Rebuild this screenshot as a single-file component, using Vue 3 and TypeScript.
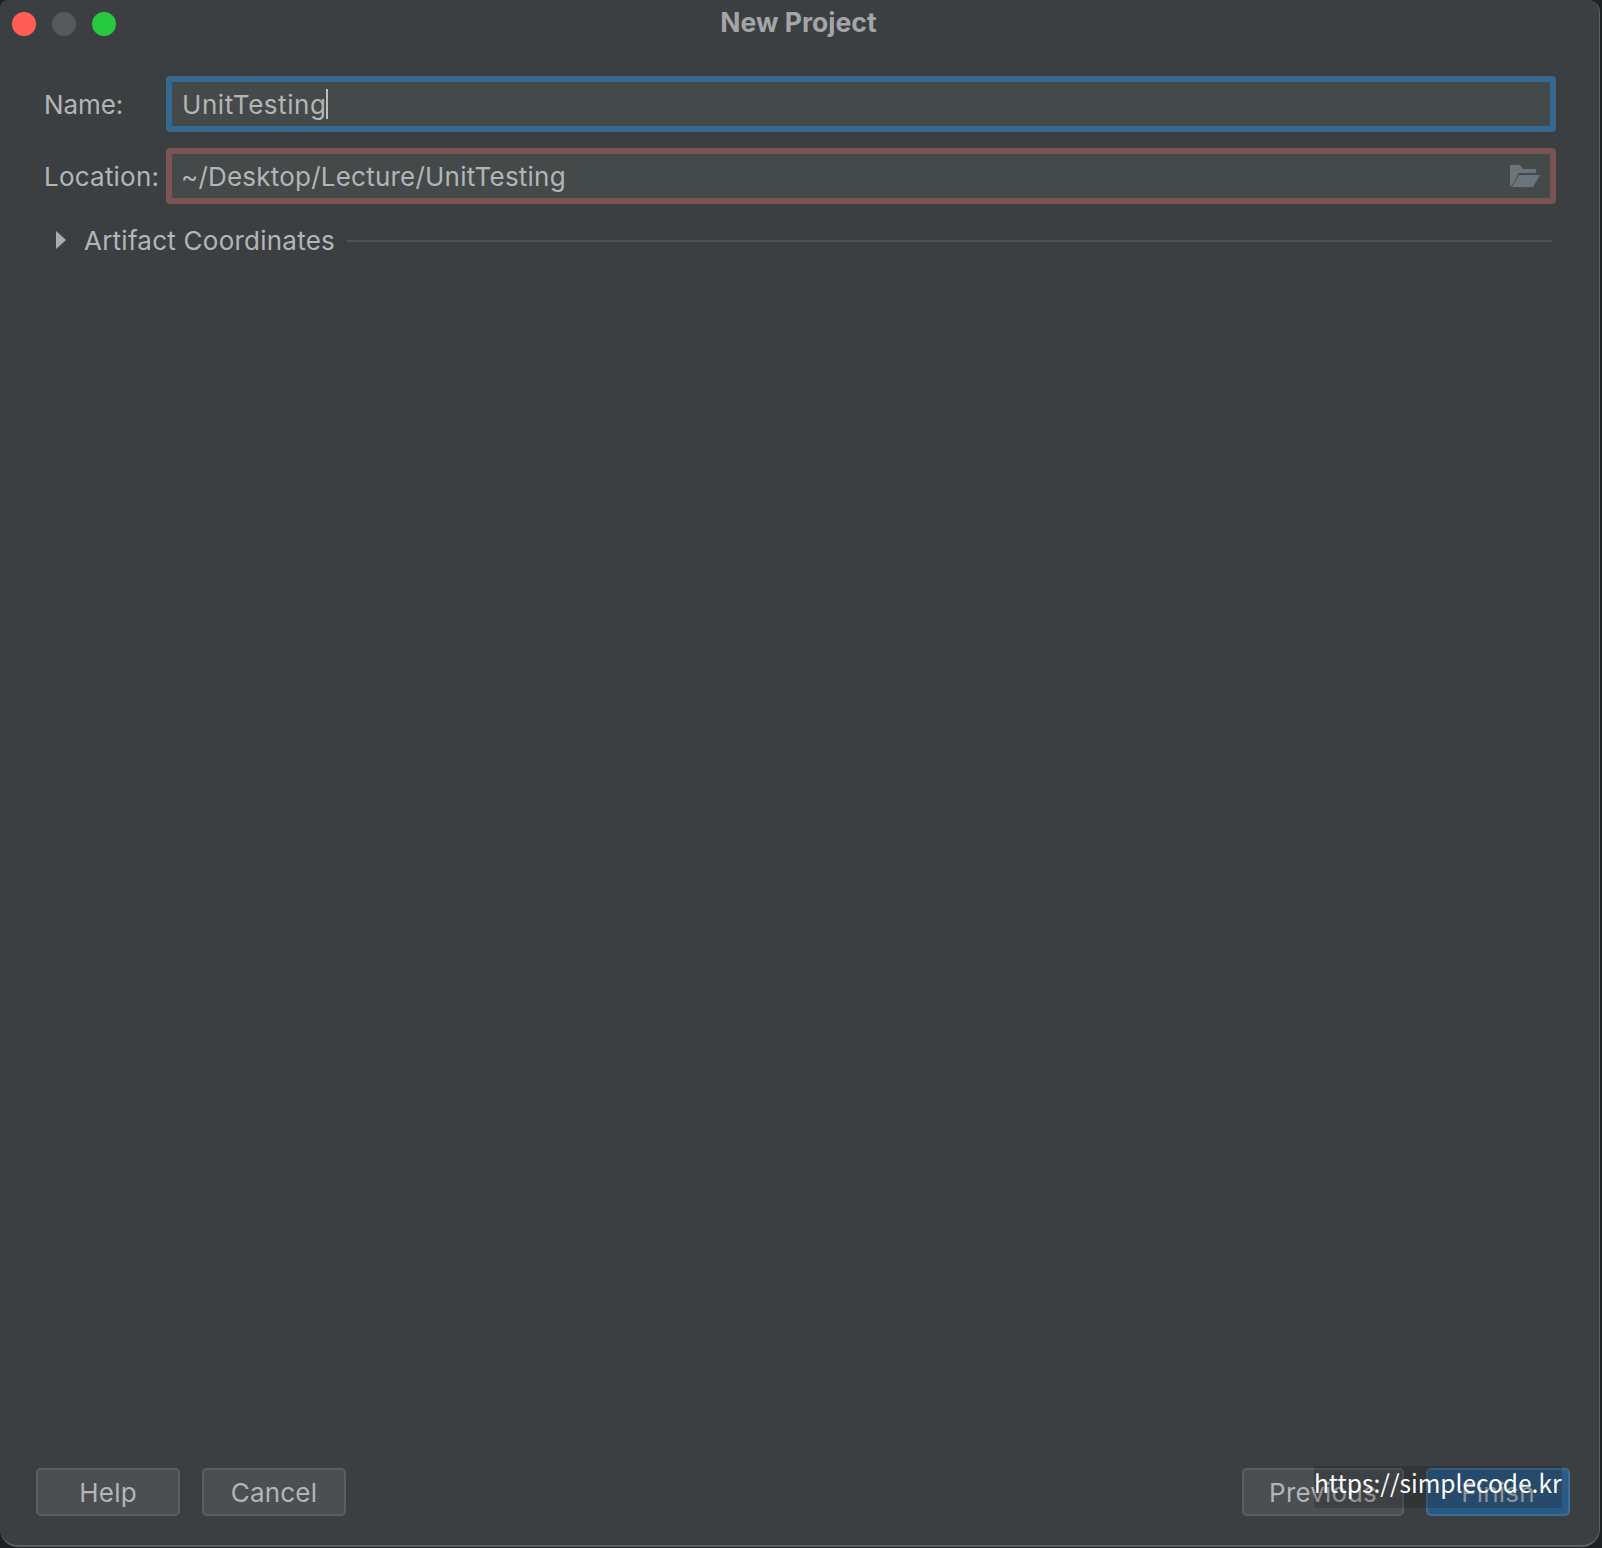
<template>
  <div class="window">
    <header class="titlebar">
      <div class="lights">
        <span class="light red"></span>
        <span class="light grey"></span>
        <span class="light green"></span>
      </div>
      <div class="title">New Project</div>
    </header>

    <main class="form">
      <div class="row">
        <label class="label name-label">Name:</label>
        <div class="field focused">
          <span class="value name-value">{{ name }}</span><span class="caret"></span>
        </div>
      </div>
      <div class="row">
        <label class="label">Location:</label>
        <div class="field invalid">
          <span class="value">{{ location }}</span>
          <svg class="folder" width="30" height="22" viewBox="0 0 30 22">
            <path d="M0 0H10L13 4H26V8H9L3 19L0 22Z" fill="#69757b" />
            <path d="M9 10H30L23 22H2Z" fill="#69757b" />
          </svg>
        </div>
      </div>
      <div class="artifact">
        <svg class="arrow" width="10" height="18" viewBox="0 0 10 18">
          <path d="M0 0L10 9L0 18Z" fill="#a9abad" />
        </svg>
        <span class="artifact-text">Artifact Coordinates</span>
        <span class="rule"></span>
      </div>
    </main>

    <footer class="actions">
      <div class="group">
        <button class="btn">Help</button>
        <button class="btn">Cancel</button>
      </div>
      <div class="group">
        <button class="btn wide">Previous</button>
        <button class="btn primary">Finish</button>
      </div>
    </footer>

    <div class="watermark">https://simplecode.kr</div>
  </div>
</template>

<script setup lang="ts">
const name = 'UnitTesting'
const location = '~/Desktop/Lecture/UnitTesting'
</script>

<style>
html,
body {
  background: #1f2021;
}
</style>

<style scoped>
.window {
  position: relative;
  box-sizing: border-box;
  display: flex;
  flex-direction: column;
  width: 1600px;
  height: 1547px;
  background: #3c3f41;
  border-right: 1px solid #5c5f61;
  border-bottom: 2px solid #5c5f61;
  border-radius: 8px 12px 18px 18px;
  font-family: Inter, "Liberation Sans", sans-serif;
  color: #b3b5b7;
  overflow: hidden;
}

.titlebar {
  position: relative;
  flex: none;
  height: 46px;
  display: flex;
  align-items: center;
  justify-content: center;
}

.lights {
  position: absolute;
  left: 12px;
  top: 12px;
  display: flex;
  gap: 16px;
}

.light {
  width: 24px;
  height: 24px;
  border-radius: 50%;
}

.red {
  background: #ff5f57;
}

.grey {
  background: #55595b;
}

.green {
  background: #28c840;
}

.title {
  margin-right: 2px;
  margin-bottom: 2px;
  font-size: 26.5px;
  font-weight: 700;
  color: #a3a5a7;
}

.form {
  flex: 1;
  display: flex;
  flex-direction: column;
  gap: 16px;
  padding: 30px 43px 0 44px;
}

.row {
  display: flex;
  align-items: center;
}

.label {
  flex: none;
  width: 122px;
  font-size: 26px;
  letter-spacing: 0.22px;
}

.name-label {
  letter-spacing: -0.1px;
}

.field {
  flex: 1;
  box-sizing: border-box;
  height: 56px;
  display: flex;
  align-items: center;
  padding-left: 9px;
  padding-right: 10px;
  background: #444a49;
  border: 6px solid;
  border-radius: 4px;
  font-size: 26px;
  letter-spacing: 0.22px;
}

.name-value {
  margin-left: 1px;
  letter-spacing: 0.55px;
}

.focused {
  border-color: #36698f;
}

.invalid {
  border-color: #7a5354;
  justify-content: space-between;
}

.caret {
  width: 2px;
  height: 30px;
  background: #bbbdbf;
}

.artifact {
  display: flex;
  align-items: center;
  height: 34px;
  margin-top: 4px;
  padding-left: 12px;
}

.arrow {
  flex: none;
  margin-bottom: 2px;
}

.artifact-text {
  margin-left: 18px;
  margin-bottom: 2px;
  font-size: 26px;
  letter-spacing: 0.24px;
}

.rule {
  flex: 1;
  height: 2px;
  margin-left: 12px;
  margin-right: 4px;
  background: #505253;
}

.actions {
  flex: none;
  display: flex;
  justify-content: space-between;
  padding: 0 29px 29px 36px;
}

.group {
  display: flex;
  gap: 22px;
}

.btn {
  box-sizing: border-box;
  width: 144px;
  height: 48px;
  padding: 0;
  background: #4b4f51;
  border: 2px solid #5c5f61;
  border-radius: 5px;
  font-family: inherit;
  font-size: 26px;
  letter-spacing: 0.2px;
  color: #b3b5b7;
}

.wide {
  width: 162px;
}

.primary {
  background: #2b5a85;
  border-color: #3c6d96;
}

.watermark {
  position: absolute;
  left: 1314px;
  top: 1466px;
  width: 248px;
  height: 42px;
  background: rgba(20, 20, 20, 0.22);
  color: #fff;
  font-family: "Noto Sans CJK KR", "Noto Sans", sans-serif;
  font-size: 24.5px;
  line-height: 34px;
  white-space: nowrap;
}
</style>
